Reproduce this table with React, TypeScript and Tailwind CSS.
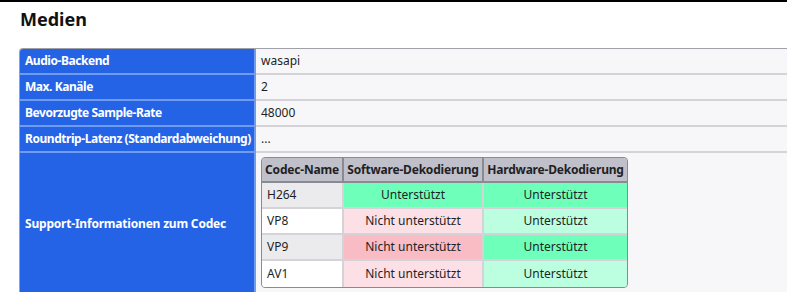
const codecs = [
  { name: "H264", sw: true, hw: true, odd: true },
  { name: "VP8", sw: false, hw: true, odd: false },
  { name: "VP9", sw: false, hw: true, odd: true },
  { name: "AV1", sw: false, hw: true, odd: false },
];

const rows = [
  { label: "Audio-Backend", value: "wasapi" },
  { label: "Max. Kanäle", value: "2" },
  { label: "Bevorzugte Sample-Rate", value: "48000" },
  { label: "Roundtrip-Latenz (Standardabweichung)", value: "..." },
];

function supportCell(ok: boolean, odd: boolean) {
  // grün = unterstützt, rosa = nicht unterstützt, ungerade Zeilen kräftiger
  const bg = ok
    ? odd ? "bg-[#6effbb]" : "bg-[#bbffe0]"
    : odd ? "bg-[#f9bcc4]" : "bg-[#fde0e6]";
  return bg;
}

function CodecTable() {
  return (
    <div className="w-[367px] rounded-[4px] border border-[#8a8a92] bg-[#d4d4d8] overflow-hidden">
      <div className="flex h-[25px] bg-[#c0c0ca] font-bold tracking-[-0.2px] text-[#1f1f24] border-b-2 border-[#8a8a92]">
        <div className="w-[82px] flex items-center justify-center border-r-2 border-[#8a8a92]">Codec-Name</div>
        <div className="w-[140px] flex items-center justify-center border-r-2 border-[#8a8a92]">Software-Dekodierung</div>
        <div className="flex-1 flex items-center justify-center">Hardware-Dekodierung</div>
      </div>
      {codecs.map((c, i) => (
        <div key={c.name} className={`flex h-[26px] ${i < codecs.length - 1 ? "border-b-2 border-[#d4d4d8]" : ""}`}>
          <div className={`w-[82px] flex items-center pl-[5px] border-r-2 border-[#d4d4d8] ${c.odd ? "bg-[#ebebee]" : "bg-white"}`}>
            {c.name}
          </div>
          <div className={`w-[140px] flex items-center justify-center border-r-2 border-[#d4d4d8] ${supportCell(c.sw, c.odd)}`}>
            {c.sw ? "Unterstützt" : "Nicht unterstützt"}
          </div>
          <div className={`flex-1 flex items-center justify-center ${supportCell(c.hw, c.odd)}`}>
            {c.hw ? "Unterstützt" : "Nicht unterstützt"}
          </div>
        </div>
      ))}
    </div>
  );
}

export default function App() {
  return (
    <div className="h-[292px] w-[787px] overflow-hidden bg-white border-t-2 border-black font-['Noto_Sans',sans-serif] text-[12px] text-[#1f1f24]">
      <h2 className="pl-5 pt-[5px] text-[18px] font-bold leading-[24px] text-[#111]">Medien</h2>

      <div className="ml-[19px] mt-[17px] w-[800px] rounded-tl-[4px] border-l border-t border-[#a0a0a8] overflow-hidden">
        {rows.map((r) => (
          <div key={r.label} className="flex h-[26px]">
            <div className="w-[236px] shrink-0 flex items-center pl-[5px] whitespace-nowrap tracking-[-0.45px] bg-[#2563e6] text-white font-bold border-b-2 border-r-2 border-[#6f9cf0]">
              {r.label}
            </div>
            <div className="flex-1 flex items-center pl-[5px] bg-[#f7f7f9] border-b-2 border-[#d4d4d8]">
              {r.value}
            </div>
          </div>
        ))}
        <div className="flex h-[141px]">
          <div className="w-[236px] shrink-0 flex items-center pl-[5px] whitespace-nowrap tracking-[-0.2px] bg-[#2563e6] text-white font-bold border-r-2 border-[#6f9cf0]">
            Support-Informationen zum Codec
          </div>
          <div className="flex-1 bg-[#f7f7f9] pl-[5px] pt-[4px]">
            <CodecTable />
          </div>
        </div>
      </div>
    </div>
  );
}
